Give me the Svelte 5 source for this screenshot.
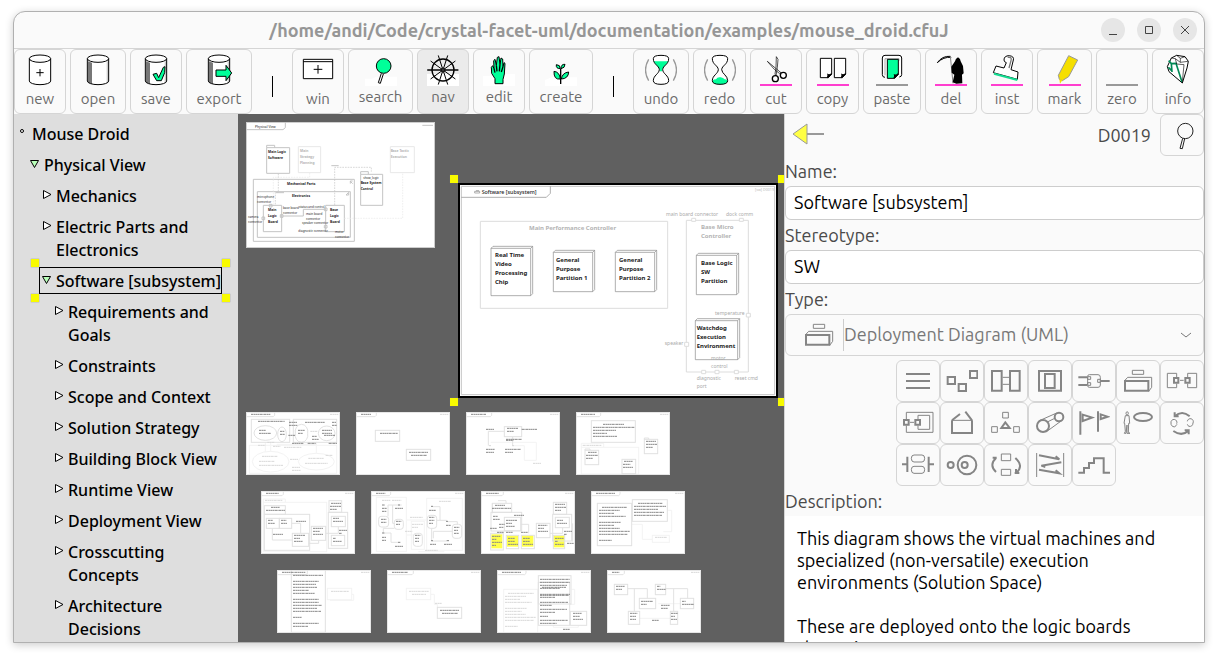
<script lang="ts">
	const green = "#00ff99";
	const pink = "#ff3ecf";
	const grey = "#999999";
	const cylinder = "M16 14A32 11 0 0 1 80 14V81A32 11 0 0 1 16 81ZM16 14A32 11 0 0 0 80 14";
	const shade = "M18 22Q24 25 30 26V90Q22 88 18 84Z";
	const shadeRight = "M74 24L78 21V84L74 87Z";
	const glass =
		"M25 14Q25 4 48 4Q71 4 71 14C71 32 54 34 53 47C54 60 71 64 71 80Q71 91 48 91Q25 91 25 80C25 64 42 60 43 47C42 34 25 32 25 14Z";
	const parens = "M11 16Q-8 48 11 80M85 16Q104 48 85 80";

	const spokes = Array.from({ length: 10 }, (_, i) => {
		const a = (i * Math.PI) / 5;
		const x = Math.cos(a);
		const y = Math.sin(a);
		return `M${(48 + x * 6).toFixed(1)} ${(48 + y * 6).toFixed(1)}L${(48 + x * 46).toFixed(1)} ${(48 + y * 46).toFixed(1)}`;
	}).join("");

	// every part of an icon is [path, fill, stroke, stroke width]
	const line = (color) => ["M0 90H96V96H0Z", color, "none", 0];
	const black = (d, fill = "none", width = 3) => [d, fill, "#000", width];
	const solid = (d, fill) => [d, fill, "none", 0];

	const tools = [
		{ name: "new", size: 52, icon: [black(cylinder, "#fff"), black("M37 56H59M48 45V67")] },
		{ name: "open", size: 56, icon: [solid(cylinder, "#fff"), solid(shade, "#777"), solid(shadeRight, "#ccc"), black(cylinder)] },
		{
			name: "save",
			size: 52,
			icon: [
				solid(cylinder, "#fff"),
				solid(shade, "#777"),
				solid(shadeRight, "#ccc"),
				black(cylinder),
				black("M39 61L50 58L56 71L70 40L75 38L74 56L64 80H50Z", green)
			]
		},
		{
			name: "export",
			size: 66,
			icon: [
				solid(cylinder, "#fff"),
				solid(shade, "#777"),
				solid(shadeRight, "#ccc"),
				black(cylinder),
				black("M39 48H69V34L86 57L69 80V67H39Z", green)
			]
		},
		{ separator: true, size: 32 },
		{ name: "win", size: 52, icon: [black("M4 16H92V74H4ZM4 23H92M35 46H61M48 33V59", "#fff")] },
		{
			name: "search",
			size: 65,
			toggle: true,
			icon: [
				solid("M0 74H20L34 68H96V96H0Z", "#fff"),
				black("M49 58L40 86L46 88L55 60", "#fff"),
				black("M34 36A22 22 0 1 1 78 36A22 22 0 1 1 34 36Z", green)
			]
		},
		{
			name: "nav",
			size: 52,
			toggle: true,
			active: true,
			icon: [
				solid("M0 60H96V96H0Z", "#fff"),
				["M0 48H94", "none", "#555", 5],
				black("M15 48A33 33 0 1 1 81 48A33 33 0 1 1 15 48Z", "none", 4),
				black(spokes, "none", 3),
				black("M42 48A6 6 0 1 1 54 48A6 6 0 1 1 42 48Z", "#333")
			]
		},
		{
			name: "edit",
			size: 52,
			toggle: true,
			icon: [
				solid("M0 66H30L46 60H96V96H0Z", "#fff"),
				black("M36 89V74L26 58L25 40L29 35L33 44L32 20L36 16L40 34L43 10L48 8L51 32L54 12L59 15L60 38L63 26L66 28L64 60L60 76V89Z", green),
				black("M33 44L36 56M40 34L42 52M51 32L49 52M60 38L55 54", "none", 4)
			]
		},
		{
			name: "create",
			size: 64,
			toggle: true,
			icon: [
				solid("M0 78L20 70H96V96H0Z", "#fff"),
				black("M47 90V44", "none", 4),
				black("M46 75Q26 78 27 52Q44 54 46 75ZM49 75Q52 56 71 54Q70 74 49 75Z", green),
				black("M46 44Q32 44 34 32Q46 32 46 44ZM48 44Q48 30 60 31Q60 42 48 44Z", green)
			]
		},
		{ separator: true, size: 32 },
		{
			name: "undo",
			size: 56,
			icon: [
				[parens, "none", grey, 4],
				solid(glass, "#fff"),
				solid("M26 22H70C65 34 53 36 51 52H45C43 36 31 34 26 22Z", green),
				black(glass)
			]
		},
		{
			name: "redo",
			size: 53,
			icon: [
				[parens, "none", grey, 4],
				solid(glass, "#fff"),
				solid("M25 80Q30 76 36 76Q40 68 50 70Q58 72 62 76Q66 76 71 80Q71 91 48 91Q25 91 25 80Z", green),
				black(glass)
			]
		},
		{
			name: "cut",
			size: 52,
			icon: [
				black("M22 22L46 42L64 57L58 58L43 46ZM49 8L54 16L52 40L48 66L45 60L48 40Z", "#fff", 2),
				black("M37 74A9 9 0 1 1 55 74A9 9 0 1 1 37 74ZM61 64A9 9 0 1 1 79 64A9 9 0 1 1 61 64Z", "#fff", 4),
				line(pink)
			]
		},
		{
			name: "copy",
			size: 53,
			icon: [
				black("M10 13H44V60L34 71H10ZM52 13H86V60L76 71H52Z", "#fff"),
				black("M31 71Q34 66 33 62Q38 64 44 59ZM73 71Q76 66 75 62Q80 64 86 59Z", "#fff", 4),
				line(pink)
			]
		},
		{
			name: "paste",
			size: 58,
			icon: [
				black("M27 70Q19 70 19 62V12Q19 4 27 4H69Q77 4 77 12V62Q77 68 70 69", "#fff"),
				black("M27 64V14H69V20", "none", 1),
				black("M34 16H67V61L56 73H34Z", green),
				black("M54 72Q57 67 56 63Q61 65 67 60Z", "#fff", 4),
				line(grey)
			]
		},
		{
			name: "del",
			size: 52,
			icon: [
				black("M7 26Q22 5 46 7L48 10Q26 8 7 26Z", "none", 3),
				["M46 6L54 88", "none", "#888", 3],
				solid("M60 22Q61 14 69 10Q77 14 77 22L84 36L86 58L81 62L82 88L64 89L53 85L58 62L50 56L49 38Z", "#000"),
				line(pink)
			]
		},
		{
			name: "inst",
			size: 52,
			icon: [
				black("M39 18Q39 5 55 5Q70 7 67 18L60 47L81 54L79 76L7 56L15 36L39 42L46 26Q39 24 39 18Z", "#fff"),
				["M50 10Q64 8 60 20L54 42", "none", "#777", 4],
				["M9 59L79 78", "none", "#13dc91", 6],
				line(pink)
			]
		},
		{
			name: "mark",
			size: 55,
			icon: [
				["M59 5L86 18L59 68L40 80L31 76L28 64Z", "#f5df00", grey, 3],
				solid("M31 74L40 79L33 89Z", "#f5df00"),
				line(pink)
			]
		},
		{ name: "zero", size: 52, icon: [line(grey)] },
		{
			name: "info",
			size: 52,
			icon: [
				black("M28 12L44 4L69 8L79 22L75 42L61 87L21 53L16 38Z", "#fff"),
				["M20 20L28 29L42 28L60 84M28 29L30 54M19 40L29 50", "none", "#008855", 5],
				["M28 12L40 14L55 25L78 22M40 14L44 30L66 32L61 84M44 4L55 13L69 8M55 13V25", "none", "#111", 2]
			]
		}
	];

	const tree = [
		{ level: 0, name: "Mouse Droid", state: "root" },
		{ level: 1, name: "Physical View", state: "open" },
		{ level: 2, name: "Mechanics" },
		{ level: 2, name: "Electric Parts and Electronics" },
		{ level: 2, name: "Software [subsystem]", state: "open", selected: true },
		{ level: 3, name: "Requirements and Goals" },
		{ level: 3, name: "Constraints" },
		{ level: 3, name: "Scope and Context" },
		{ level: 3, name: "Solution Strategy" },
		{ level: 3, name: "Building Block View" },
		{ level: 3, name: "Runtime View" },
		{ level: 3, name: "Deployment View" },
		{ level: 3, name: "Crosscutting Concepts" },
		{ level: 3, name: "Architecture Decisions" }
	];

	// diagram types, 7 in a row, drawn on one common sheet
	const types = [
		{ name: "List", thick: "M48 57H120M48 78H120M48 99H120" },
		{ name: "Box", thick: "M173 66H195V87H173ZM206 87H228V108H206ZM240 48H262V69H240Z" },
		{ name: "Block", thick: "M306 48H335V107H306ZM360 48H389V107H360Z", thin: "M338 67H357M338 88H357" },
		{ name: "Internal block", thick: "M447 48H513V107H447ZM465 57H494V99H465Z" },
		{
			name: "Component",
			thick: "M565 67H591M565 90H591M633 78H659",
			thin: "M598 59H624Q631 59 631 67V90Q631 97 624 97H598Q593 97 593 92V64Q593 59 598 59ZM593 65H602V73H593ZM593 83H602V91H593ZM623 73H631V82H623Z"
		},
		{ name: "Deployment", thick: "M705 78H775V107H705Z", thin: "M727 46H761V58H727ZM703 78L713 67H785V97L776 109" },
		{
			name: "Composite structure",
			thick: "M852 69H865V83H852ZM886 69H899V83H886Z",
			thin: "M860 66V55H832V98H860V86M893 66V55H920V98H893V86M870 76H881"
		},
		{
			name: "Interface",
			thick: "M42 195H56V209H42ZM76 195H90V209H76Z",
			thin: "M49 192V172H129V232H49V212M84 192V181H119V223H84V212M60 202H72"
		},
		{ name: "Package", thick: "M186 196V234H246V196M186 196L210 177M226 170L246 196", thin: "M186 196H246" },
		{
			name: "Profile",
			thick: "M346 202L334 219H359Z",
			thin: "M338 172H355V189H338ZM305 215H322V232H305ZM371 215H388V232H371Z"
		},
		{
			name: "Use case",
			thick: "M441 213A18 18 0 1 1 477 213A18 18 0 1 1 441 213ZM494 186A13 13 0 1 1 520 186A13 13 0 1 1 494 186Z",
			thin: "M446 198L500 174M468 231L512 199M474 200L494 190"
		},
		{ name: "Timing", thick: "M571 169V239M578 179L606 188L578 198ZM624 169V230M632 178L653 185L632 192Z" },
		{
			name: "Requirement",
			thick: "M732 186A27 12 0 1 1 786 186A27 12 0 1 1 732 186Z",
			thin: "M708 175A3 4 0 1 1 715 175A3 4 0 1 1 708 175ZM706 182H717L719 205H716L715 232L720 235H711V210L708 235H703L706 229L704 205H702Z"
		},
		{
			name: "State machine",
			thick: "M854 184Q876 164 899 184M854 172V184H866M896 226Q876 246 850 228M896 238V226H884",
			thin: "M843 204A9 9 0 1 1 860 206M843 204Q842 214 854 216L861 208M909 204A9 9 0 1 0 892 199M909 204Q908 216 896 214L892 208"
		},
		{
			name: "Communication",
			thick: "M36 328H52M52 305V351M116 305V351M116 328H132",
			thin: "M72 300H96Q104 300 104 310Q104 321 96 321H72Q64 321 64 310Q64 300 72 300ZM72 334H96Q104 334 104 344Q104 355 96 355H72Q64 355 64 344Q64 334 72 334Z"
		},
		{
			name: "Activity",
			thick: "M173 330A9 9 0 1 1 191 330A9 9 0 1 1 173 330ZM203 330A28 28 0 1 1 259 330A28 28 0 1 1 203 330ZM215 330A9 9 0 1 1 233 330A9 9 0 1 1 215 330Z"
		},
		{
			name: "Interaction overview",
			thick: "M320 308H308M318 309Q296 330 318 351M376 309Q402 332 380 353M374 354H388M378 354V342",
			thin: "M334 297H362V317H334ZM334 343H362V361H334Z"
		},
		{ name: "Sequence", thick: "M447 301L508 313L497 304M514 322L454 332L466 336M447 344L508 355L497 346", thin: "M440 294V366M521 294V366" },
		{ name: "Timing steps", thick: "M565 353H582V339H597V324H612V310H641V353H660" }
	];

	// text lines are [x, y, width], boxes are [x, y, width, height]
	const rows = [
		[
			{
				view: "18 21 282 189",
				tab: [86, 58],
				boxes: [[34, 43, 115, 69], [160, 43, 130, 69]],
				light: [[28, 121, 262, 84]],
				path: "M42 84A34 22 0 1 1 110 84A34 22 0 1 1 42 84ZM113 88A13 22 0 1 1 139 88A13 22 0 1 1 113 88ZM166 85A19 22 0 1 1 203 85A19 22 0 1 1 166 85ZM235 85A25 22 0 1 1 285 85A25 22 0 1 1 235 85Z",
				faint: "M37 170A55 31 0 1 1 147 170A55 31 0 1 1 37 170ZM175 170A54 25 0 1 1 283 170A54 25 0 1 1 175 170ZM76 112V140M92 112V140M229 110V145M110 118H230",
				text: [[54, 49, 80], [195, 52, 60], [57, 76, 20], [57, 85, 36], [120, 79, 14], [120, 88, 15], [174, 76, 20], [174, 85, 15], [246, 76, 30], [246, 85, 30], [252, 91, 33], [145, 91, 20], [216, 94, 15], [216, 103, 20], [147, 52, 24], [147, 61, 26], [276, 52, 12], [276, 61, 15], [156, 115, 35], [203, 115, 24], [266, 115, 25]],
				pale: [[66, 154, 46], [57, 169, 46], [57, 181, 72], [205, 160, 46], [195, 175, 68], [132, 127, 53], [54, 121, 22], [82, 112, 22], [99, 124, 22], [211, 79, 22], [150, 163, 24], [156, 187, 24], [156, 196, 27], [257, 151, 20]]
			},
			{
				view: "348 21 282 189",
				tab: [61, 30],
				boxes: [[406, 76, 73, 33], [499, 133, 73, 33]],
				text: [[420, 85, 54], [507, 142, 57], [513, 151, 48]]
			},
			{
				view: "18 21 282 189",
				tab: [77, 45],
				boxes: [[133, 65, 52, 30]],
				path: "M133 79H85V122M158 95V122",
				faint: "M92 112H229V166M160 122H193V166H229",
				text: [[141, 70, 34], [141, 79, 20], [78, 73, 24], [185, 73, 46], [138, 103, 48], [138, 106, 22], [78, 133, 27], [78, 142, 24], [135, 133, 48], [135, 142, 24]],
				pale: [[219, 175, 24], [87, 122, 6], [156, 122, 6]]
			},
			{
				view: "348 21 282 189",
				tab: [74, 42],
				boxes: [[394, 47, 132, 65], [553, 103, 40, 43], [375, 136, 41, 43], [486, 163, 41, 43]],
				light: [[364, 127, 172, 80]],
				path: "M553 103V99H566V103M375 136V132H390V136",
				faint: "M364 127V115H431V127",
				text: [[429, 58, 63], [399, 67, 125], [399, 76, 69], [399, 85, 42], [399, 94, 72], [558, 109, 30], [558, 118, 34], [558, 127, 20], [384, 142, 27], [378, 151, 36], [378, 160, 21], [492, 169, 27], [489, 178, 22], [489, 187, 30]],
				pale: [[368, 121, 56]]
			}
		],
		[
			{
				view: "63 258 282 189",
				tab: [67, 38],
				boxes: [[73, 302, 63, 26], [73, 328, 136, 108], [79, 340, 39, 30], [118, 340, 37, 30], [157, 385, 49, 39], [214, 364, 43, 42], [265, 322, 58, 108], [267, 287, 38, 35], [274, 334, 42, 31], [274, 391, 40, 31]],
				light: [[70, 292, 190, 148]],
				path: "M97 370V405H157M155 355H182V385M206 415H236V406M257 385H295V365",
				faint: "M70 292V282H136V292",
				text: [[93, 307, 27], [78, 316, 57], [84, 346, 15], [84, 355, 21], [123, 346, 16], [123, 355, 18], [168, 349, 30], [99, 388, 30], [162, 391, 34], [162, 400, 18], [162, 409, 27], [219, 370, 30], [219, 379, 20], [219, 388, 30], [273, 295, 30], [270, 304, 33], [270, 313, 20], [279, 340, 18], [279, 349, 30], [297, 376, 24], [297, 385, 9], [279, 400, 9], [279, 409, 27]],
				pale: [[75, 286, 53]]
			},
			{
				view: "393 258 282 189",
				tab: [59, 28],
				light: [[409, 277, 90, 162], [560, 280, 107, 156], [514, 349, 39, 84]],
				path: "M423 334H437Q446 334 446 343V357Q446 366 437 366H424Q416 366 416 357V343Q416 334 423 334ZM471 343H482Q490 343 490 352V364Q490 373 482 373H471Q463 373 463 364V352Q463 343 471 343ZM571 331H582Q590 331 590 340V361Q590 370 582 370H571Q562 370 562 361V340Q562 331 571 331ZM645 358H656Q665 358 665 367V391Q665 400 656 400H645Q637 400 637 391V367Q637 358 645 358ZM529 385H539Q547 385 547 394V415Q547 424 539 424H529Q520 424 520 415V394Q520 385 529 385ZM444 334V300H485M458 300V355H463M430 370V384H453V412H475M463 370H430M578 305H600V345M590 346H620M622 350H652V358M575 370V408H620M637 379H580V400",
				faint: "M499 345H560M499 390H520M535 440H613",
				text: [[426, 300, 9], [426, 310, 15], [426, 319, 14], [465, 310, 24], [474, 300, 6], [423, 343, 16], [423, 352, 16], [468, 349, 16], [468, 358, 12], [426, 384, 7], [426, 397, 13], [426, 406, 12], [474, 412, 7], [465, 424, 24], [573, 304, 6], [567, 316, 20], [567, 337, 16], [567, 346, 16], [567, 355, 13], [618, 349, 6], [618, 361, 15], [642, 367, 16], [642, 376, 12], [642, 385, 15], [573, 407, 6], [570, 418, 18], [620, 407, 7], [612, 418, 24], [525, 391, 16], [525, 400, 12], [525, 409, 12]],
				pale: [[426, 286, 26], [456, 286, 28], [597, 289, 36], [510, 337, 39], [516, 358, 33], [516, 367, 18], [495, 379, 22], [555, 436, 39]]
			},
			{
				view: "63 258 282 189",
				tab: [67, 39],
				notes: [[94, 388, 33, 42], [141, 391, 34, 34], [186, 391, 34, 34], [280, 391, 34, 36]],
				boxes: [[97, 295, 58, 27], [93, 322, 92, 56], [133, 337, 49, 40], [92, 385, 38, 50], [139, 391, 37, 40], [184, 391, 39, 40], [229, 355, 41, 43], [280, 292, 40, 36], [278, 328, 57, 80], [286, 337, 42, 31], [280, 391, 34, 40]],
				path: "M97 295V325M114 287H138V295M182 358H206V385M270 385H308V368M338 355V410",
				text: [[105, 301, 30], [96, 310, 57], [99, 334, 15], [99, 343, 20], [162, 331, 30], [138, 346, 34], [138, 355, 18], [138, 364, 27], [117, 358, 17], [117, 367, 14], [90, 370, 20], [111, 382, 20], [138, 382, 20], [183, 382, 20], [96, 394, 26], [96, 403, 14], [96, 412, 30], [96, 421, 12], [144, 400, 20], [144, 409, 20], [144, 418, 30], [189, 400, 20], [189, 409, 20], [189, 418, 30], [234, 361, 28], [234, 370, 18], [234, 379, 30], [285, 298, 30], [285, 307, 33], [285, 316, 18], [291, 346, 18], [291, 355, 30], [312, 379, 24], [312, 388, 9], [285, 400, 27], [285, 409, 9], [285, 418, 27], [321, 415, 20]]
			},
			{
				view: "393 258 282 189",
				tab: [87, 57],
				boxes: [[412, 295, 103, 127], [517, 284, 105, 65]],
				light: [[577, 391, 51, 21]],
				faint: "M515 358H547V403H577M622 316H635V380H610",
				text: [[426, 307, 75], [417, 316, 62], [417, 325, 45], [417, 334, 80], [417, 352, 66], [417, 361, 45], [417, 370, 62], [417, 379, 93], [417, 388, 86], [417, 406, 39], [534, 295, 74], [522, 304, 96], [522, 313, 72], [522, 322, 90], [522, 331, 84]],
				pale: [[585, 397, 36]]
			}
		],
		[
			{
				view: "111 495 282 189",
				tab: [91, 70],
				boxes: [[154, 490, 102, 192]],
				light: [[262, 550, 73, 34]],
				faint: "M335 568H341V586H270",
				text: [[159, 511, 90], [159, 529, 78], [159, 538, 69], [159, 547, 72], [159, 556, 48], [159, 565, 66], [159, 583, 78], [159, 592, 78], [159, 601, 87], [159, 610, 72], [159, 619, 84], [159, 637, 27], [159, 655, 78], [159, 664, 45]],
				pale: [[273, 559, 54]]
			},
			{
				view: "441 495 282 189",
				tab: [79, 48],
				boxes: [[592, 607, 73, 33]],
				light: [[499, 550, 73, 34]],
				faint: "M572 568H583V598H592V607",
				text: [[600, 616, 57], [606, 625, 48]],
				pale: [[507, 559, 60], [516, 568, 42], [585, 595, 21]]
			},
			{
				view: "111 495 282 189",
				tab: [87, 57],
				boxes: [[235, 512, 98, 85], [235, 532, 94, 129], [331, 619, 49, 42]],
				light: [[131, 553, 102, 130]],
				faint: "M335 553H344V598H330M280 661V667H355V661",
				text: [[240, 523, 89], [240, 532, 89], [240, 541, 81], [246, 547, 72], [240, 550, 60], [240, 568, 90], [240, 571, 87], [240, 577, 45], [240, 592, 84], [240, 601, 36], [240, 613, 81], [240, 622, 45], [240, 634, 24], [240, 646, 83], [240, 655, 50], [339, 625, 27], [339, 634, 21], [339, 643, 30], [309, 673, 21]],
				pale: [[144, 565, 78], [135, 574, 63], [135, 583, 45], [135, 592, 80], [135, 610, 66], [135, 619, 50], [135, 628, 62], [135, 637, 93], [135, 646, 87], [135, 664, 39]]
			},
			{
				view: "441 495 282 189",
				tab: [52, 22],
				boxes: [[463, 538, 40, 31], [586, 538, 31, 31], [538, 580, 49, 31], [661, 580, 40, 31], [505, 619, 34, 39], [631, 619, 22, 39]],
				path: "M503 551H562V580M523 551V619M617 551H683V580M641 551V619",
				faint: "M595 596H661M539 640H631",
				text: [[468, 544, 27], [468, 553, 18], [591, 544, 10], [591, 553, 27], [543, 589, 36], [543, 598, 17], [666, 589, 11], [666, 598, 36], [510, 625, 22], [510, 634, 18], [510, 643, 18], [633, 625, 20], [633, 634, 12], [633, 643, 18], [603, 601, 27], [603, 610, 21], [576, 646, 21]]
			}
		]
	];

	const nodes = [
		{ x: 138, y: 229, w: 125, h: 148, tx: 150, ty: 261, lines: ["Real Time", "Video", "Processing", "Chip"] },
		{ x: 325, y: 241, w: 124, h: 124, tx: 333, ty: 276, lines: ["General", "Purpose", "Partition 1"] },
		{ x: 511, y: 241, w: 124, h: 124, tx: 522, ty: 276, lines: ["General", "Purpose", "Partition 2"] },
		{ x: 754, y: 250, w: 127, h: 124, tx: 768, ty: 285, lines: ["Base Logic", "SW", "Partition"] },
		{ x: 751, y: 446, w: 133, h: 123, tx: 755, ty: 480, lines: ["Watchdog", "Execution", "Environment"] }
	];
	const ports = [
		{ x: 663, y: 137, name: "main board connector" },
		{ x: 843, y: 137, name: "dock comm" },
		{ x: 810, y: 434, name: "temperature" },
		{ x: 659, y: 525, name: "speaker" },
		{ x: 798, y: 569, name: "motor" },
		{ x: 798, y: 593, name: "control" },
		{ x: 755, y: 629, name: "diagnostic" },
		{ x: 755, y: 653, name: "port" },
		{ x: 869, y: 629, name: "reset cmd" }
	];
	const overview = [
		{ x: 84, y: 114, lines: ["Main Logic", "Software"] },
		{ x: 180, y: 111, lines: ["Main", "Strategy", "Planning"], pale: true },
		{ x: 452, y: 111, lines: ["Base Tactic", "Execution"], pale: true },
		{ x: 362, y: 206, lines: ["Base System", "Control"] },
		{ x: 141, y: 209, lines: ["Mechanical Parts"] },
		{ x: 156, y: 245, lines: ["Electronics"] },
		{ x: 84, y: 288, lines: ["Main", "Logic", "Board"] },
		{ x: 270, y: 288, lines: ["Base", "Logic", "Board"] }
	];
	const overviewPorts = [
		{ x: 370, y: 191, name: "show_logic" },
		{ x: 51, y: 248, name: "microphone" },
		{ x: 51, y: 263, name: "connector" },
		{ x: 24, y: 308, name: "camera" },
		{ x: 24, y: 323, name: "connector" },
		{ x: 129, y: 281, name: "base board" },
		{ x: 129, y: 296, name: "connector" },
		{ x: 177, y: 278, name: "status and control" },
		{ x: 198, y: 299, name: "main board" },
		{ x: 198, y: 314, name: "connector" },
		{ x: 186, y: 326, name: "speaker connector" },
		{ x: 175, y: 350, name: "diagnostic connector" },
		{ x: 285, y: 353, name: "motor" },
		{ x: 285, y: 368, name: "connector" }
	];

	let name = "Software [subsystem]";
	let stereotype = "SW";
	let description =
		"This diagram shows the virtual machines and specialized (non-versatile) execution environments (Solution Space)\n\nThese are deployed onto the logic boards\nshown in";
</script>

{#snippet typeIcon(i)}
	<svg class="type-icon" viewBox="{36 + 132 * (i % 7)} {30 + 126 * Math.floor(i / 7)} 96 96" aria-hidden="true">
		<path d={types[i].thick} stroke-width="6" />
		<path d={types[i].thin || ""} stroke-width="3" />
	</svg>
{/snippet}

{#snippet handles()}
	<i class="handle top left"></i>
	<i class="handle top right"></i>
	<i class="handle bottom left"></i>
	<i class="handle bottom right"></i>
{/snippet}

<div class="window">
	<header>
		<h1>/home/andi/Code/crystal-facet-uml/documentation/examples/mouse_droid.cfuJ</h1>
		<div class="controls">
			<button aria-label="Minimize"><svg viewBox="0 0 24 24"><path d="M8 16.5h8" /></svg></button>
			<button aria-label="Maximize"><svg viewBox="0 0 24 24"><path d="M8.500 8.500h7v7h-7z" /></svg></button>
			<button aria-label="Close"><svg viewBox="0 0 24 24"><path d="M8 8l8 8M16 8l-8 8" /></svg></button>
		</div>
	</header>

	<nav class="toolbar">
		{#each tools as tool}
			{#if tool.separator}
				<span class="separator" style:flex="{tool.size} 1 {tool.size}px"></span>
			{:else}
				<button class:toggle={tool.toggle} class:active={tool.active} style:flex="{tool.size} 1 {tool.size}px">
					<svg viewBox="0 0 96 96" aria-hidden="true">
						{#each tool.icon as [d, fill, stroke, width]}
							<path {d} {fill} {stroke} stroke-width={width} />
						{/each}
					</svg>
					<span>{tool.name}</span>
				</button>
			{/if}
		{/each}
	</nav>

	<div class="content">
		<ul class="tree">
			{#each tree as item}
				<li style:padding-left="{item.level * 12}px">
					<button class:selected={item.selected}>
						<svg viewBox="0 0 10 10" aria-hidden="true">
							{#if item.state === "root"}
								<circle cx="4" cy="3" r="1.500" fill="#fff" />
							{:else if item.state === "open"}
								<path d="M.5 1.500h8L4.500 8.500z" fill="#b9ffb9" />
							{:else}
								<path d="M1.500 .5v8L9 4.500z" fill="#fff" />
							{/if}
						</svg>
						<span>{item.name}</span>
						{#if item.selected}
							{@render handles()}
						{/if}
					</button>
				</li>
			{/each}
		</ul>

		<main>
			<div class="focus-row">
				<svg class="overview" viewBox="18 21 567 378">
					<path class="border" d="M19 22H584V398H19Z" />
					<path class="edge" d="M19 44H129L136 38V22" />
					<path class="edge" d="M80 98H149V175H80ZM80 98V91H104V98M362 178H428V271H362ZM362 178V170H385V178M40 193H343V379H40ZM52 230H331V367H52ZM70 271H125V350H70ZM257 271H313V350H257Z" />
					<path class="edge pale" d="M175 95H242V173H175ZM451 95H523V173H451Z" />
					<path class="edge" d="M125 303H190V283H257M66 306H74V314H66ZM88 268H96V276H88ZM121 299H129V307H121ZM253 279H261V287H253ZM253 331H261V339H253ZM330 198L338 206M331 206V198H338M318 240L326 232V240H318" />
					<path class="dash" d="M115 176V232H106V270M284 270V157H394V170" />
					<path class="dash pale" d="M100 270V187H209V174M313 310H488V174" />
					<text x="45" y="38" class="small">Physical View</text>
					<path class="edge" d="M547 31H579M274 152H296M108 233H132" />
					{#each overview as label}
						<text x={label.x} class="tiny" class:pale={label.pale}>
							{#each label.lines as words, i}
								<tspan x={label.x} y={label.y + i * 18}>{words}</tspan>
							{/each}
						</text>
					{/each}
					{#each overviewPorts as port}
						<text x={port.x} y={port.y} class="micro">{port.name}</text>
					{/each}
				</svg>

				<div class="focused">
					<svg viewBox="45 45 948 633">
						<path class="border" d="M49 49H989V674H49Z" />
						<path class="title-tab" d="M49 82H304L316 70V49" />
						<path class="title-tab" d="M89 64h15v5h-15zM93 62h9" />
						<text x="110" y="72" class="title">Software [subsystem]</text>
						<text x="930" y="63" class="id">[sw] D0019</text>
						<path class="container" d="M106 154H668V415H106ZM724 151H910V606H724Z" />
						<path class="container" d="M740 145h12v9h-12zM883 145h12v9h-12zM904 430h12v11h-12zM719 517h12v12h-12zM770 601h12v10h-12zM810 601h12v10h-12zM868 601h12v10h-12z" />
						<text x="252" y="180" class="label pale">Main Performance Controller</text>
						<text class="label pale"><tspan x="768" y="177">Base Micro</tspan><tspan x="768" y="204">Controller</tspan></text>
						{#each nodes as node}
							<path
								class="node"
								d="M{node.x} {node.y + 6}h{node.w - 6}v{node.h - 6}h-{node.w - 6}zl6 -6h{node.w - 6}v{node.h - 6}l-6 6M{node.x + node.w - 6} {node.y + 6}l6 -6"
							/>
							<text class="label">
								{#each node.lines as words, i}
									<tspan x={node.tx} y={node.ty + i * 27}>{words}</tspan>
								{/each}
							</text>
						{/each}
						{#each ports as port}
							<text x={port.x} y={port.y} class="port">{port.name}</text>
						{/each}
					</svg>
					{@render handles()}
				</div>
			</div>

			{#each rows as row}
				<div class="thumbs">
					{#each row as thumb}
						{@const [x, y] = thumb.view.split(" ").map(Number)}
						<svg viewBox={thumb.view} aria-hidden="true">
							{#each thumb.notes || [] as [nx, ny, w, h]}
								<rect class="note" x={nx} y={ny} width={w} height={h} />
							{/each}
							<path class="faint" d={thumb.faint || ""} />
							{#each thumb.light || [] as [bx, by, w, h]}
								<rect class="faint" x={bx} y={by} width={w} height={h} />
							{/each}
							<path class="box" d="M{x + 1} {y + 1}h280v187h-280zv13h{thumb.tab[0] - 5}l4 -4v-9" />
							<path class="box" d={thumb.path || ""} />
							{#each thumb.boxes || [] as [bx, by, w, h]}
								<rect class="box" x={bx} y={by} width={w} height={h} />
							{/each}
							<path class="words" d="M{x + 15} {y + 7}h{thumb.tab[1]}" />
							<path class="words pale" d="M{x + 252} {y + 7}h26" />
							{#each thumb.text as [lx, ly, w]}
								<path class="words" d="M{lx} {ly}h{w}" />
							{/each}
							{#each thumb.pale || [] as [lx, ly, w]}
								<path class="words pale" d="M{lx} {ly}h{w}" />
							{/each}
						</svg>
					{/each}
				</div>
			{/each}
		</main>

		<form class="properties" on:submit|preventDefault>
			<div class="heading">
				<button type="button" class="back" aria-label="Back">
					<svg viewBox="0 0 32 32"><path d="M15 15h17" stroke="#999" stroke-width="2" /><path d="M1 15L15 5v20z" fill="#ffff44" stroke="#999" /></svg>
				</button>
				<span class="id">D0019</span>
				<button type="button" class="find" aria-label="Search">
					<svg viewBox="0 0 96 96">
						<path d="M50 58L42 88L49 89L56 59" />
						<path d="M35 36A23 23 0 1 1 81 36A23 23 0 1 1 35 36Z" />
					</svg>
				</button>
			</div>
			<label for="name">Name:</label>
			<input id="name" type="text" bind:value={name} />
			<label for="stereotype">Stereotype:</label>
			<input id="stereotype" type="text" bind:value={stereotype} />
			<label for="type">Type:</label>
			<div class="type">
				<select id="type">
					<option>Deployment Diagram (UML)</option>
				</select>
				{@render typeIcon(5)}
				<svg class="chevron" viewBox="0 0 12 12" aria-hidden="true"><path d="M1 4l5 4 5-4" /></svg>
			</div>
			<div class="types">
				{#each types as type, i}
					<button type="button" aria-label={type.name}>{@render typeIcon(i)}</button>
				{/each}
			</div>
			<label for="description">Description:</label>
			<textarea id="description" bind:value={description} spellcheck="false"></textarea>
		</form>
	</div>
</div>

<style>
	:global(body) {
		background: #fff;
	}
	.window {
		box-sizing: border-box;
		display: flex;
		flex-direction: column;
		height: calc(100vh - 27px);
		margin: 11px 13px 16px;
		border: 1px solid #b0b0b0;
		border-radius: 12px 12px 0 0;
		background: #fafafa;
		box-shadow: 0 2px 8px rgba(0, 0, 0, 0.2);
		overflow: hidden;
		font-family: Ubuntu, "Noto Sans", sans-serif;
	}
	button,
	input,
	select,
	textarea {
		box-sizing: border-box;
		margin: 0;
		font-family: inherit;
	}
	svg {
		display: block;
		fill: none;
	}
	header {
		display: grid;
		grid-template-columns: 1fr auto 1fr;
		align-items: center;
		height: 36px;
		border-bottom: 1px solid #d5d5d5;
		flex-shrink: 0;
	}
	h1 {
		grid-column: 2;
		margin: 0;
		font-size: 18px;
		font-weight: 700;
		line-height: 24px;
		color: #969696;
		white-space: nowrap;
	}
	.controls {
		display: flex;
		justify-content: flex-end;
		gap: 12px;
		padding-right: 7px;
	}
	.controls button {
		width: 24px;
		height: 24px;
		padding: 0;
		border: none;
		border-radius: 50%;
		background: #e6e6e6;
	}
	.controls path {
		stroke: #444;
	}
	.toolbar {
		display: flex;
		gap: 4px;
		height: 65px;
		flex-shrink: 0;
	}
	.toolbar button {
		display: flex;
		flex-direction: column;
		align-items: center;
		min-width: 0;
		padding: 4px 0 0;
		border: 1px solid #d5d5d5;
		border-radius: 6px;
		background: #fafafa;
		color: #6a6a6a;
		font-size: 15px;
		line-height: 26px;
	}
	.toolbar .toggle {
		line-height: 22px;
	}
	.toolbar .active {
		background: #ebebeb;
	}
	.toolbar svg {
		width: 32px;
		height: 32px;
		flex-shrink: 0;
	}
	.separator {
		display: flex;
		justify-content: center;
		align-items: center;
	}
	.separator::before {
		content: "";
		width: 1px;
		height: 21px;
		margin-top: 10px;
		background: #000;
	}
	.content {
		display: grid;
		grid-template-columns: 224px minmax(0, 1fr) 420px;
		flex: 1;
		min-height: 0;
	}
	.tree {
		display: flex;
		flex-direction: column;
		gap: 4px;
		margin: 0;
		padding: 6px 16px 0 1px;
		background: #dedede;
		list-style: none;
		overflow: hidden;
	}
	.tree li {
		flex-shrink: 0;
	}
	.tree button {
		--edge: 1px;
		position: relative;
		display: flex;
		gap: 4px;
		width: 100%;
		padding: 2px 0 0 2px;
		border: 1px solid transparent;
		background: none;
		color: #000;
		font-family: "Noto Sans", sans-serif;
		font-size: 16px;
		font-weight: 500;
		line-height: 23px;
		text-align: left;
	}
	.tree .selected {
		border-color: #000;
		white-space: nowrap;
	}
	.tree svg {
		width: 10px;
		height: 10px;
		margin-top: 5px;
		stroke: #000;
		flex-shrink: 0;
	}
	.handle {
		position: absolute;
		width: 8px;
		height: 8px;
		background: #f8fb00;
		box-shadow: 0 0 1px #777;
	}
	.handle.top {
		bottom: calc(100% + var(--edge));
	}
	.handle.bottom {
		top: calc(100% + var(--edge));
	}
	.handle.left {
		right: calc(100% + var(--edge));
	}
	.handle.right {
		left: calc(100% + var(--edge));
	}
	main {
		display: flex;
		flex-direction: column;
		gap: 16px;
		padding: 8px;
		background: #606060;
		overflow: hidden;
	}
	.focus-row {
		display: flex;
		align-items: flex-start;
		gap: 23px;
		margin-bottom: -2px;
	}
	.overview {
		width: 189px;
		height: 126px;
		background: #fff;
		flex-shrink: 0;
	}
	.focused {
		--edge: 2px;
		position: relative;
		width: 316px;
		margin-top: 61px;
		border: 2px solid #000;
		background: #fff;
		flex-shrink: 0;
	}
	main text {
		font-family: "Noto Sans", sans-serif;
		fill: #222;
	}
	.label {
		font-size: 18px;
		font-weight: 700;
	}
	.title {
		font-size: 16px;
		font-weight: 500;
	}
	.small {
		font-size: 10px;
	}
	.tiny {
		font-size: 10px;
		font-weight: 700;
	}
	main .micro {
		font-size: 9px;
		fill: #222;
	}
	main .port {
		font-size: 15px;
		fill: #aaa;
	}
	main .focused .id {
		font-size: 11px;
		fill: #bbb;
	}
	main text.pale {
		fill: #b4b4b4;
	}
	.border {
		stroke: #c4c4c4;
		stroke-width: 3;
	}
	.title-tab {
		stroke: #888;
		stroke-width: 2;
	}
	.container {
		stroke: #ddd;
		stroke-width: 3;
		fill: #fff;
	}
	.node {
		stroke: #888;
		stroke-width: 2;
	}
	.edge,
	.dash {
		stroke: #c4c4c4;
		stroke-width: 3;
	}
	.dash {
		stroke-width: 2;
		stroke-dasharray: 5 3;
	}
	.edge.pale,
	.dash.pale {
		stroke: #e8e8e8;
	}
	.thumbs {
		display: flex;
		gap: 16px;
	}
	.thumbs:nth-child(3) {
		padding-left: 15px;
	}
	.thumbs:nth-child(4) {
		padding-left: 31px;
	}
	.thumbs svg {
		width: 94px;
		height: 63px;
		background: #fff;
		flex-shrink: 0;
	}
	.box {
		stroke: #e2e2e2;
		stroke-width: 3;
	}
	.faint {
		stroke: #f3f3f3;
		stroke-width: 3;
	}
	.note {
		fill: #ffff4a;
	}
	.words {
		stroke: #888;
		stroke-width: 3;
		stroke-dasharray: 7 1 4 1;
	}
	.words.pale {
		stroke: #d8d8d8;
	}
	.properties {
		display: flex;
		flex-direction: column;
		min-height: 0;
		margin: 0;
		border-left: 1px solid #d5d5d5;
		background: #fafafa;
		position: relative;
	}
	.properties > * {
		flex-shrink: 0;
	}
	.heading {
		display: flex;
		align-items: center;
		height: 42px;
	}
	.back {
		padding: 0;
		margin-left: 7px;
		border: none;
		background: none;
	}
	.back svg {
		width: 32px;
		height: 32px;
	}
	.heading .id {
		margin-left: auto;
		margin-right: 9px;
		color: #4a4a4a;
		font-size: 18px;
	}
	.find,
	.types button {
		display: flex;
		align-items: center;
		justify-content: center;
		width: 44px;
		height: 42px;
		padding: 0;
		border: 1px solid #d5d5d5;
		border-radius: 6px;
		background: #fafafa;
	}
	.find svg {
		width: 32px;
		height: 32px;
		stroke: #222;
		stroke-width: 3;
	}
	label {
		color: #4a4a4a;
		font-size: 18px;
		line-height: 30px;
	}
	input,
	select {
		width: 100%;
		border: 1px solid #cdcdcd;
		border-radius: 6px;
		font-size: 18px;
	}
	input {
		height: 34px;
		padding: 0 8px 2px;
		background: #fff;
		color: #000;
	}
	.type {
		position: relative;
	}
	select {
		display: block;
		height: 42px;
		padding: 0 32px 2px 58px;
		border-color: #d5d5d5;
		background: #fafafa;
		color: #777;
		appearance: none;
	}
	.type .type-icon {
		position: absolute;
		top: 5px;
		left: 18px;
	}
	.type::after {
		content: "";
		position: absolute;
		top: 5px;
		left: 58px;
		width: 1px;
		height: 32px;
		background: #ccc;
	}
	.chevron {
		position: absolute;
		top: 15px;
		right: 12px;
		width: 12px;
		height: 12px;
		stroke: #777;
	}
	.type-icon {
		width: 32px;
		height: 32px;
		stroke: #858585;
	}
	.types {
		display: grid;
		grid-template-columns: repeat(7, 44px);
		justify-content: end;
		padding-top: 4px;
	}
	textarea {
		flex: 1;
		min-height: 0;
		padding: 11px 12px 0;
		border: none;
		background: #fff;
		color: #000;
		font-size: 18px;
		line-height: 22px;
		resize: none;
		overflow: hidden;
	}
</style>
